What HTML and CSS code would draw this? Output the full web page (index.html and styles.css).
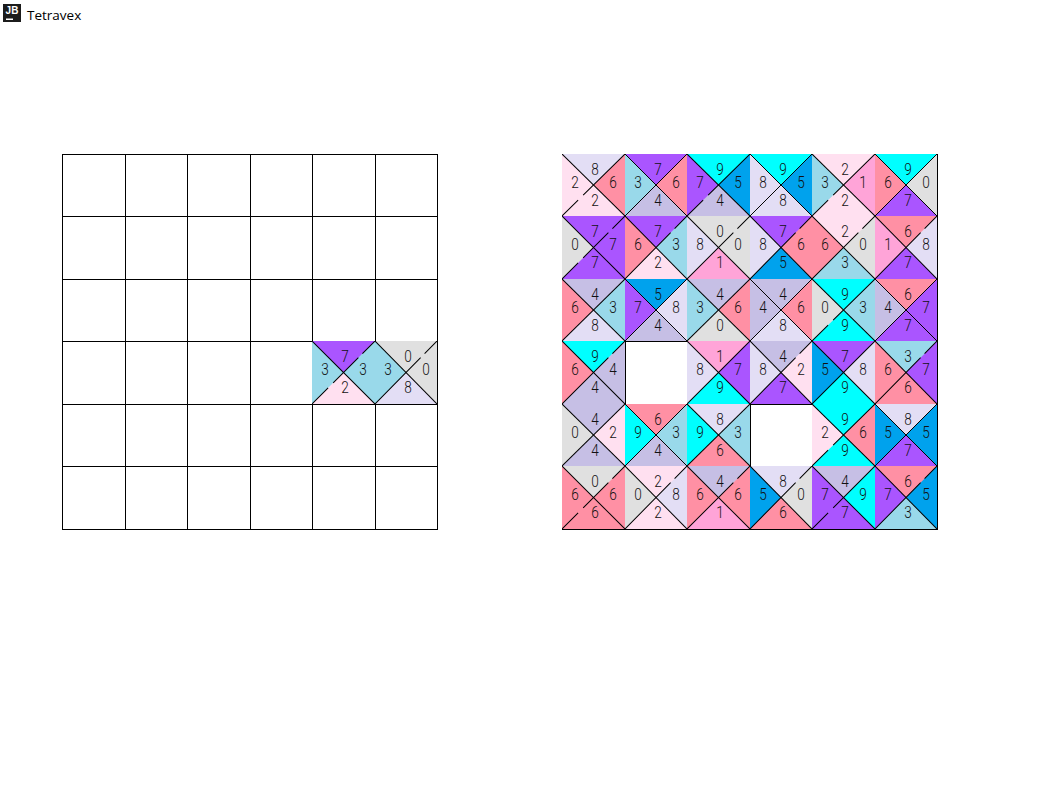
FILE: index.html
```html
<!DOCTYPE html>
<html lang="en">
<head>
<meta charset="utf-8">
<title>Tetravex</title>
<link rel="stylesheet" href="styles.css">
</head>
<body>
<svg class="defs" width="0" height="0" aria-hidden="true">
  <defs>
    <g id="faces">
      <polygon class="fe" points="62.5,-1 62.5,63.5 30.25,31.25"/>
      <polygon class="fw" points="0,-1 0,63.5 32.25,31.25"/>
      <polygon class="fn" points="0,0 62.5,0 31.25,31.25"/>
      <polygon class="fs" points="0,62.5 62.5,62.5 31.25,31.25"/>
      <path class="ln" d="M0 0L62.5 62.5"/>
    </g>
    <symbol id="x" viewBox="0 0 62.5 62.5" preserveAspectRatio="none"><use href="#faces"/><path class="ln" d="M0 62.5L62.5 0"/></symbol>
    <symbol id="u" viewBox="0 0 62.5 62.5" preserveAspectRatio="none"><use href="#faces"/><path class="ln" d="M0 62.5L46 16.5M50 12.5L62.5 0"/></symbol>
    <symbol id="l" viewBox="0 0 62.5 62.5" preserveAspectRatio="none"><use href="#faces"/><path class="ln" d="M0 62.5L16 46.5M21 41.5L62.5 0"/></symbol>
    <symbol id="b" viewBox="0 0 62.5 62.5" preserveAspectRatio="none"><use href="#faces"/><path class="ln" d="M0 62.5L16 46.5M21 41.5L46 16.5M50 12.5L62.5 0"/></symbol>
  </defs>
</svg>
<header class="titlebar">
  <svg class="logo" viewBox="0 0 18 18" width="18" height="18" aria-hidden="true">
    <rect width="18" height="18" fill="#1c1c1c"/>
    <text class="logo-text" x="9" y="10">JB</text>
    <rect x="3" y="14.5" width="7" height="1.5" fill="#fff"/>
  </svg>
  <span class="title">Tetravex</span>
</header>
<main class="boards">
  <section class="board">
    <div class="cell"></div><div class="cell"></div><div class="cell"></div><div class="cell"></div><div class="cell"></div><div class="cell"></div>
    <div class="cell"></div><div class="cell"></div><div class="cell"></div><div class="cell"></div><div class="cell"></div><div class="cell"></div>
    <div class="cell"></div><div class="cell"></div><div class="cell"></div><div class="cell"></div><div class="cell"></div><div class="cell"></div>
    <div class="cell"></div><div class="cell"></div><div class="cell"></div><div class="cell"></div>
    <div class="tile n7 e3 s2 w3"><svg class="art"><use href="#b"/></svg><span class="d dn">7</span><span class="d de">3</span><span class="d ds">2</span><span class="d dw">3</span></div>
    <div class="tile n0 e0 s8 w3"><svg class="art"><use href="#u"/></svg><span class="d dn">0</span><span class="d de">0</span><span class="d ds">8</span><span class="d dw">3</span></div>
    <div class="cell"></div><div class="cell"></div><div class="cell"></div><div class="cell"></div><div class="cell"></div><div class="cell"></div>
    <div class="cell"></div><div class="cell"></div><div class="cell"></div><div class="cell"></div><div class="cell"></div><div class="cell"></div>
  </section>
  <section class="board">
    <div class="tile n8 e6 s2 w2"><svg class="art"><use href="#l"/></svg><span class="d dn">8</span><span class="d de">6</span><span class="d ds">2</span><span class="d dw">2</span></div>
    <div class="tile n7 e6 s4 w3"><svg class="art"><use href="#x"/></svg><span class="d dn">7</span><span class="d de">6</span><span class="d ds">4</span><span class="d dw">3</span></div>
    <div class="tile n9 e5 s4 w7"><svg class="art"><use href="#l"/></svg><span class="d dn">9</span><span class="d de">5</span><span class="d ds">4</span><span class="d dw">7</span></div>
    <div class="tile n9 e5 s8 w8"><svg class="art"><use href="#x"/></svg><span class="d dn">9</span><span class="d de">5</span><span class="d ds">8</span><span class="d dw">8</span></div>
    <div class="tile n2 e1 s2 w3"><svg class="art"><use href="#l"/></svg><span class="d dn">2</span><span class="d de">1</span><span class="d ds">2</span><span class="d dw">3</span></div>
    <div class="tile n9 e0 s7 w6"><svg class="art"><use href="#x"/></svg><span class="d dn">9</span><span class="d de">0</span><span class="d ds">7</span><span class="d dw">6</span></div>

    <div class="tile n7 e7 s7 w0"><svg class="art"><use href="#b"/></svg><span class="d dn">7</span><span class="d de">7</span><span class="d ds">7</span><span class="d dw">0</span></div>
    <div class="tile n7 e3 s2 w6"><svg class="art"><use href="#u"/></svg><span class="d dn">7</span><span class="d de">3</span><span class="d ds">2</span><span class="d dw">6</span></div>
    <div class="tile n0 e0 s1 w8"><svg class="art"><use href="#u"/></svg><span class="d dn">0</span><span class="d de">0</span><span class="d ds">1</span><span class="d dw">8</span></div>
    <div class="tile n7 e6 s5 w8"><svg class="art"><use href="#u"/></svg><span class="d dn">7</span><span class="d de">6</span><span class="d ds">5</span><span class="d dw">8</span></div>
    <div class="tile n2 e0 s3 w6"><svg class="art"><use href="#u"/></svg><span class="d dn">2</span><span class="d de">0</span><span class="d ds">3</span><span class="d dw">6</span></div>
    <div class="tile n6 e8 s7 w1"><svg class="art"><use href="#u"/></svg><span class="d dn">6</span><span class="d de">8</span><span class="d ds">7</span><span class="d dw">1</span></div>

    <div class="tile n4 e3 s8 w6"><svg class="art"><use href="#x"/></svg><span class="d dn">4</span><span class="d de">3</span><span class="d ds">8</span><span class="d dw">6</span></div>
    <div class="tile n5 e8 s4 w7"><svg class="art"><use href="#x"/></svg><span class="d dn">5</span><span class="d de">8</span><span class="d ds">4</span><span class="d dw">7</span></div>
    <div class="tile n4 e6 s0 w3"><svg class="art"><use href="#x"/></svg><span class="d dn">4</span><span class="d de">6</span><span class="d ds">0</span><span class="d dw">3</span></div>
    <div class="tile n4 e6 s8 w4"><svg class="art"><use href="#x"/></svg><span class="d dn">4</span><span class="d de">6</span><span class="d ds">8</span><span class="d dw">4</span></div>
    <div class="tile n9 e3 s9 w0"><svg class="art"><use href="#l"/></svg><span class="d dn">9</span><span class="d de">3</span><span class="d ds">9</span><span class="d dw">0</span></div>
    <div class="tile n6 e7 s7 w4"><svg class="art"><use href="#x"/></svg><span class="d dn">6</span><span class="d de">7</span><span class="d ds">7</span><span class="d dw">4</span></div>

    <div class="tile n9 e4 s4 w6"><svg class="art"><use href="#u"/></svg><span class="d dn">9</span><span class="d de">4</span><span class="d ds">4</span><span class="d dw">6</span></div>
    <div class="cell"></div>
    <div class="tile n1 e7 s9 w8"><svg class="art"><use href="#x"/></svg><span class="d dn">1</span><span class="d de">7</span><span class="d ds">9</span><span class="d dw">8</span></div>
    <div class="tile n4 e2 s7 w8"><svg class="art"><use href="#u"/></svg><span class="d dn">4</span><span class="d de">2</span><span class="d ds">7</span><span class="d dw">8</span></div>
    <div class="tile n7 e8 s9 w5"><svg class="art"><use href="#x"/></svg><span class="d dn">7</span><span class="d de">8</span><span class="d ds">9</span><span class="d dw">5</span></div>
    <div class="tile n3 e7 s6 w6"><svg class="art"><use href="#u"/></svg><span class="d dn">3</span><span class="d de">7</span><span class="d ds">6</span><span class="d dw">6</span></div>

    <div class="tile n4 e2 s4 w0"><svg class="art"><use href="#x"/></svg><span class="d dn">4</span><span class="d de">2</span><span class="d ds">4</span><span class="d dw">0</span></div>
    <div class="tile n6 e3 s4 w9"><svg class="art"><use href="#x"/></svg><span class="d dn">6</span><span class="d de">3</span><span class="d ds">4</span><span class="d dw">9</span></div>
    <div class="tile n8 e3 s6 w9"><svg class="art"><use href="#x"/></svg><span class="d dn">8</span><span class="d de">3</span><span class="d ds">6</span><span class="d dw">9</span></div>
    <div class="cell"></div>
    <div class="tile n9 e6 s9 w2"><svg class="art"><use href="#l"/></svg><span class="d dn">9</span><span class="d de">6</span><span class="d ds">9</span><span class="d dw">2</span></div>
    <div class="tile n8 e5 s7 w5"><svg class="art"><use href="#x"/></svg><span class="d dn">8</span><span class="d de">5</span><span class="d ds">7</span><span class="d dw">5</span></div>

    <div class="tile n0 e6 s6 w6"><svg class="art"><use href="#b"/></svg><span class="d dn">0</span><span class="d de">6</span><span class="d ds">6</span><span class="d dw">6</span></div>
    <div class="tile n2 e8 s2 w0"><svg class="art"><use href="#u"/></svg><span class="d dn">2</span><span class="d de">8</span><span class="d ds">2</span><span class="d dw">0</span></div>
    <div class="tile n4 e6 s1 w6"><svg class="art"><use href="#u"/></svg><span class="d dn">4</span><span class="d de">6</span><span class="d ds">1</span><span class="d dw">6</span></div>
    <div class="tile n8 e0 s6 w5"><svg class="art"><use href="#u"/></svg><span class="d dn">8</span><span class="d de">0</span><span class="d ds">6</span><span class="d dw">5</span></div>
    <div class="tile n4 e9 s7 w7"><svg class="art"><use href="#l"/></svg><span class="d dn">4</span><span class="d de">9</span><span class="d ds">7</span><span class="d dw">7</span></div>
    <div class="tile n6 e5 s3 w7"><svg class="art"><use href="#u"/></svg><span class="d dn">6</span><span class="d de">5</span><span class="d ds">3</span><span class="d dw">7</span></div>
  </section>
</main>
</body>
</html>
```
FILE: styles.css
```css
* { box-sizing: border-box; }
html, body { margin: 0; background: #fff; }
body { font-family: "Open Sans", "Noto Sans", sans-serif; color: #000; height: 786px; overflow: hidden; }

.defs { position: absolute; }

.titlebar { display: flex; align-items: center; gap: 6px; height: 30px; padding-left: 3px; }
.logo { flex: none; margin-bottom: 4px; }
.logo-text { font: bold 10px "Liberation Sans", sans-serif; fill: #fff; text-anchor: middle; }
.title { font-size: 13.5px; line-height: 18px; }

.boards { display: flex; gap: 124px; padding: 124px 0 0 62px; }

.board {
  display: grid;
  grid-template-columns: 63px 62px 63px 62px 63px 62px;
  grid-template-rows: 62px 63px 62px 63px 62px 63px;
  box-sizing: content-box;
  width: 375px;
  height: 375px;
  border-right: 1px solid #000;
  border-bottom: 1px solid #000;
}

.cell { border-top: 1px solid #000; border-left: 1px solid #000; background: #fff; }

.tile { position: relative; }
.art { position: absolute; inset: 0; width: 100%; height: 100%; display: block; }
.art polygon, .art path { shape-rendering: crispEdges; }
.fn { fill: var(--n); }
.fe { fill: var(--e); }
.fs { fill: var(--s); }
.fw { fill: var(--w); }
.ln { fill: none; stroke: #000; stroke-width: 1; }

.d {
  position: absolute;
  width: 16px;
  margin-left: -8px;
  text-align: center;
  font-family: "Roboto", sans-serif;
  font-weight: 300;
  font-size: 16px;
  line-height: 18px;
  color: #111;
  transform: scaleX(.85);
}
.dn { left: 33px; top: 7px; }
.de { left: 51px; top: 20px; }
.ds { left: 33px; top: 38px; }
.dw { left: 13px; top: 20px; }

.n0 { --n: #e0e0e0; } .e0 { --e: #e0e0e0; } .s0 { --s: #e0e0e0; } .w0 { --w: #e0e0e0; }
.n1 { --n: #ffa4d8; } .e1 { --e: #ffa4d8; } .s1 { --s: #ffa4d8; } .w1 { --w: #ffa4d8; }
.n2 { --n: #ffe0f0; } .e2 { --e: #ffe0f0; } .s2 { --s: #ffe0f0; } .w2 { --w: #ffe0f0; }
.n3 { --n: #99d9ea; } .e3 { --e: #99d9ea; } .s3 { --s: #99d9ea; } .w3 { --w: #99d9ea; }
.n4 { --n: #c6bfe5; } .e4 { --e: #c6bfe5; } .s4 { --s: #c6bfe5; } .w4 { --w: #c6bfe5; }
.n5 { --n: #00a2ed; } .e5 { --e: #00a2ed; } .s5 { --s: #00a2ed; } .w5 { --w: #00a2ed; }
.n6 { --n: #ff90a4; } .e6 { --e: #ff90a4; } .s6 { --s: #ff90a4; } .w6 { --w: #ff90a4; }
.n7 { --n: #aa55ff; } .e7 { --e: #aa55ff; } .s7 { --s: #aa55ff; } .w7 { --w: #aa55ff; }
.n8 { --n: #e3def5; } .e8 { --e: #e3def5; } .s8 { --s: #e3def5; } .w8 { --w: #e3def5; }
.n9 { --n: #00ffff; } .e9 { --e: #00ffff; } .s9 { --s: #00ffff; } .w9 { --w: #00ffff; }
```
